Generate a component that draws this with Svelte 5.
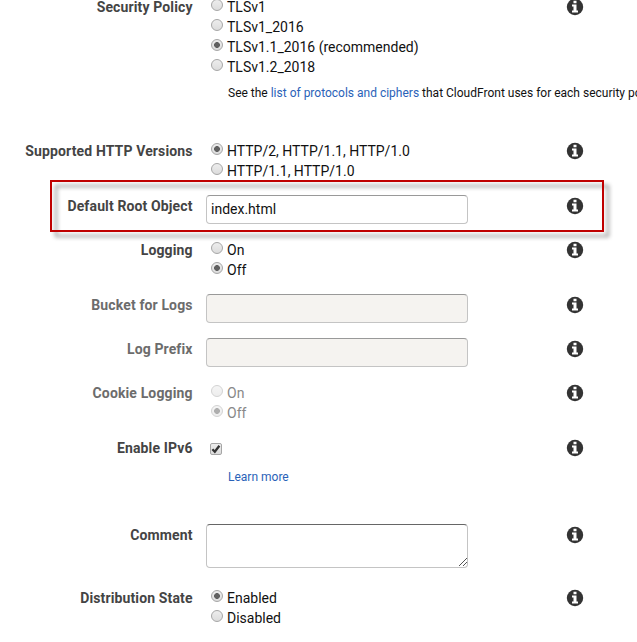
<script>
  const rows = [
    { label: 'Security Policy', height: 144, name: 'policy', options: ['TLSv1', 'TLSv1_2016', 'TLSv1.1_2016 (recommended)', 'TLSv1.2_2018'], selected: 2, help: 'policy' },
    { label: 'Supported HTTP Versions', height: 55, name: 'http', options: ['HTTP/2, HTTP/1.1, HTTP/1.0', 'HTTP/1.1, HTTP/1.0'], selected: 0 },
    { label: 'Default Root Object', height: 44, kind: 'text', value: 'index.html', highlight: true },
    { label: 'Logging', height: 55, name: 'logging', options: ['On', 'Off'], selected: 1 },
    { label: 'Bucket for Logs', height: 44, kind: 'text', value: '', disabled: true },
    { label: 'Log Prefix', height: 44, kind: 'text', value: '', disabled: true },
    { label: 'Cookie Logging', height: 55, name: 'cookies', options: ['On', 'Off'], selected: 1, disabled: true },
    { label: 'Enable IPv6', height: 87, kind: 'check', help: 'ipv6' },
    { label: 'Comment', height: 63, kind: 'area' },
    { label: 'Distribution State', height: 57, name: 'state', options: ['Enabled', 'Disabled'], selected: 0 }
  ];
</script>

<main>
  {#each rows as row}
    <section class="row" class:disabled={row.disabled} style="height: {row.height}px">
      <div class="label"><span>{row.label}</span></div>
      <div class="field">
        {#if row.options}
          {#each row.options as option, i}
            <label class="option">
              <input type="radio" name={row.name} checked={i === row.selected} disabled={row.disabled} />
              <span>{option}</span>
            </label>
          {/each}
        {:else if row.kind === 'text'}
          <input class="text" type="text" value={row.value} disabled={row.disabled} aria-label={row.label} />
        {:else if row.kind === 'area'}
          <div class="area">
            <textarea aria-label={row.label}></textarea>
            <svg class="grip" width="9" height="9" viewBox="0 0 9 9" shape-rendering="crispEdges">
              <path d="M0.5 8.5 8.5 0.5M4.5 8.5 8.5 4.5" fill="none" stroke="#555" />
            </svg>
          </div>
        {:else}
          <label class="check" aria-label={row.label}>
            <input type="checkbox" checked />
            <svg width="12" height="12" viewBox="0 0 12 12"><path d="M2.4 6.3 4.8 8.8 9.4 2.7" fill="none" stroke="#333" stroke-width="2.3" /></svg>
          </label>
        {/if}
        {#if row.help === 'policy'}
          <p class="help policy">See the <a href="#ciphers">list of protocols and ciphers</a> that CloudFront uses for each security policy.</p>
        {:else if row.help === 'ipv6'}
          <p class="help"><a href="#ipv6">Learn more</a></p>
        {/if}
      </div>
      <svg class="info" width="16" height="16" viewBox="0 0 16 16">
        <circle cx="8" cy="8" r="8.2" fill="#333" />
        <path d="M6.5 1.7h3v2.6h-3zM5 5.6h4.5v6H11v2H5v-2h1.5v-4H5z" fill="#fff" />
      </svg>
      {#if row.highlight}<div class="highlight"></div>{/if}
    </section>
  {/each}
</main>

<style>
  :global(body) { background: #fff; }
  main {
    box-sizing: border-box;
    width: 637px;
    height: 642px;
    overflow: hidden;
    font-family: Roboto, "Liberation Sans", sans-serif;
    font-size: 14px;
    line-height: 20px;
    color: #111;
    background: #fff;
  }
  .row {
    position: relative;
    display: grid;
    grid-template-columns: 193px 361px 16px;
    column-gap: 0;
  }
  .row:first-child { margin-top: -3px; }
  .label {
    padding-right: 0.4px;
    text-align: right;
    font-weight: 700;
    letter-spacing: 0.13px;
    color: #444;
    white-space: nowrap;
  }
  .disabled .label { color: #6c6c6c; }
  .field { padding-left: 13px; min-width: 0; }
  .info { margin: 2px 0 0 13px; overflow: visible; }
  .option {
    display: flex;
    height: 20px;
    padding-left: 5px;
    gap: 4px;
    white-space: nowrap;
  }
  .disabled .option { color: #888; }
  input[type='radio'], input[type='checkbox'] {
    appearance: none;
    box-sizing: border-box;
    flex: none;
    width: 12px;
    height: 12px;
    margin: 2px 0 0;
    border: 1px solid #a6a6a6;
    background: linear-gradient(#ededed, #dcdcdc);
  }
  input[type='radio'] { border-radius: 50%; }
  input[type='radio']:checked {
    background: radial-gradient(circle, #606060 0 2.6px, transparent 3.2px), linear-gradient(#ededed, #dcdcdc);
  }
  input[type='radio']:disabled { opacity: 0.5; }
  .text, textarea {
    display: block;
    box-sizing: border-box;
    width: 262px;
    height: 29px;
    margin: -1px 0 0;
    padding: 0 4px 1px;
    border: 1px solid #c4c4c4;
    border-top-color: #999;
    border-radius: 4px;
    background: #fff;
    color: #111;
    font: 14px Roboto, "Liberation Sans", sans-serif;
  }
  .text:disabled { background: #f5f3f0; }
  .area { position: relative; width: 262px; }
  textarea { height: 44px; resize: none; border-top-color: #666; }
  .grip { position: absolute; right: 1px; bottom: 1px; }
  .check { position: relative; display: block; height: 20px; padding-left: 4px; }
  input[type='checkbox'] { display: block; margin: 0; border-radius: 2px; position: relative; top: 5px; }
  .check svg { position: absolute; left: 4px; top: 5px; }
  .help {
    margin: 9px 0 0 22px;
    font-size: 12px;
    white-space: nowrap;
  }
  .help.policy { margin-top: 6px; }
  a { color: #2a62b8; text-decoration: none; }
  .highlight {
    position: absolute;
    left: 50px;
    top: -16px;
    box-sizing: border-box;
    width: 554px;
    height: 52px;
    border: 2px solid #c00000;
    filter: drop-shadow(5px 5px 2px rgba(0, 0, 0, 0.45));
    pointer-events: none;
  }
</style>
